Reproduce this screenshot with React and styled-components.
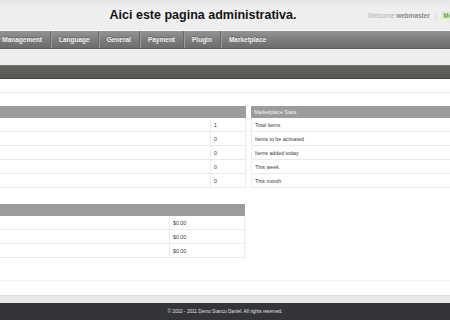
import React from "react";
import styled, { createGlobalStyle } from "styled-components";

const Global = createGlobalStyle`
  html, body { margin: 0; padding: 0; background: #ffffff; overflow: hidden; }
  body { font-family: "Liberation Sans", Arial, sans-serif; width: 450px; height: 320px; }
  #root { width: 450px; height: 320px; overflow: hidden; }
`;

const Page = styled.div`
  width: 450px;
  height: 320px;
  display: flex;
  flex-direction: column;
  overflow: hidden;
`;

const Header = styled.header`
  height: 30px;
  border-bottom: 1px solid #fafafa;
  background: linear-gradient(#e6e6e6, #efefef 30%, #eeeeee);
  display: grid;
  grid-template-columns: 368px auto;
  align-items: center;
  white-space: nowrap;
`;

const Title = styled.h1`
  margin: 0;
  padding-left: 38px;
  text-align: center;
  font-size: 12.5px;
  font-weight: bold;
  color: #151515;
  line-height: 1;
  padding-top: 1px;
`;

const Welcome = styled.div`
  font-size: 6.4px;
  color: #b0b0b0;
  display: flex;
  align-items: center;
  gap: 3px;
  padding-top: 1px;
`;

const User = styled.span`
  color: #8a8a8a;
  font-weight: bold;
`;

const Sep = styled.span`
  color: #c4c4c4;
  padding: 0 2px;
`;

const GreenLink = styled.span`
  color: #6aa84f;
  background: #e3efd9;
  padding: 1px 2px;
  font-weight: bold;
`;

const Nav = styled.nav`
  height: 17px;
  border-bottom: 1px solid #5e5e5e;
  background: linear-gradient(#939393, #7e7e7e 50%, #6c6c6c);
  display: flex;
  align-items: stretch;
  margin-left: -22px;
  width: 520px;
`;

const NavItem = styled.a`
  display: flex;
  align-items: center;
  padding: 0 8px;
  font-size: 6.5px;
  font-weight: bold;
  color: #f2f2f2;
  text-decoration: none;
  white-space: nowrap;
  text-shadow: 0 -1px 0 rgba(0, 0, 0, 0.25);
  border-right: 1px solid ${(p) => (p.$last ? "transparent" : "#666")};
  box-shadow: ${(p) => (p.$last ? "none" : "1px 0 0 #9a9a9a")};
`;

const LightBand = styled.div`
  height: 17px;
  background: #eeeeee;
`;

const DarkBar = styled.div`
  height: 12px;
  border-top: 1px solid #767672;
  border-bottom: 1px solid #454543;
  background: linear-gradient(#64645f, #575753);
`;

const Main = styled.main`
  flex: 1;
  background: #ffffff;
  display: flex;
  flex-direction: column;
`;

const Strip = styled.div`
  height: 13px;
  border-bottom: 1px solid #eeeeee;
`;

const Content = styled.div`
  padding: 13px 0 22px;
  margin-left: -160px;
  width: 700px;
  border-bottom: 1px solid #f0f0f0;
  display: flex;
  flex-direction: column;
  gap: 16px;
`;

const Row = styled.div`
  display: flex;
  gap: 5px;
`;

const Table = styled.div`
  width: ${(p) => p.$w}px;
  display: grid;
  grid-template-columns: ${(p) => p.$cols};
  font-size: 5.3px;
  color: #3a3a3a;
`;

const Head = styled.div`
  grid-column: 1 / -1;
  height: 12px;
  background: #9c9c9c;
  color: #f4f4f4;
  display: flex;
  align-items: center;
  padding-left: 3px;
  font-size: 5.3px;
`;

const Cell = styled.div`
  height: 13px;
  border-bottom: 1px solid #e9e9e9;
  border-right: 1px solid #ececec;
  border-left: ${(p) => (p.$first ? "1px solid #ececec" : "none")};
  display: flex;
  align-items: center;
  padding-left: 3px;
  white-space: nowrap;
  overflow: hidden;
`;

const Spacer = styled.div`
  height: 14px;
`;

const Band = styled.div`
  height: 7px;
  border-top: 1px solid #dddddd;
  background: #e8e8e8;
`;

const Footer = styled.footer`
  height: 17px;
  background: #333538;
  color: #e0e0e0;
  font-size: 4.7px;
  display: flex;
  align-items: center;
  justify-content: center;
`;

const navItems = ["User Management", "Language", "General", "Payment", "Plugin", "Marketplace"];

const userStats = [
  ["Total users", "1"],
  ["Users waiting for activation", "0"],
  ["Users registered today", "0"],
  ["Users registered this week", "0"],
  ["Users registered this month", "0"],
];

const marketStats = ["Total items", "Items to be activated", "Items added today", "This week", "This month"];

const salesStats = [
  ["Sales today", "$0.00"],
  ["Sales this week", "$0.00"],
  ["Sales this month", "$0.00"],
];

export default function App() {
  return (
    <Page>
      <Global />
      <Header>
        <Title>Aici este pagina administrativa.</Title>
        <Welcome>
          <span>
            Welcome <User>webmaster</User>
          </span>
          <Sep>|</Sep>
          <GreenLink>Menu</GreenLink>
        </Welcome>
      </Header>
      <Nav>
        {navItems.map((n, i) => (
          <NavItem key={n} $last={i === navItems.length - 1}>
            {n}
          </NavItem>
        ))}
      </Nav>
      <LightBand />
      <DarkBar />
      <Main>
        <Strip />
        <Content>
          <Row>
            <Table $w={406} $cols="371px 1fr">
              <Head>Users Stats</Head>
              {userStats.map(([l, v]) => (
                <React.Fragment key={l}>
                  <Cell $first>{l}</Cell>
                  <Cell>{v}</Cell>
                </React.Fragment>
              ))}
            </Table>
            <Table $w={260} $cols="1fr">
              <Head>Marketplace Stats</Head>
              {marketStats.map((l) => (
                <Cell key={l} $first>
                  {l}
                </Cell>
              ))}
            </Table>
          </Row>
          <Table $w={405} $cols="330px 1fr">
            <Head>Sales Stats</Head>
            {salesStats.map(([l, v]) => (
              <React.Fragment key={l}>
                <Cell $first>{l}</Cell>
                <Cell>{v}</Cell>
              </React.Fragment>
            ))}
          </Table>
        </Content>
        <Spacer />
      </Main>
      <Band />
      <Footer>© 2010 - 2011 Demo Stancu Daniel. All rights reserved.</Footer>
    </Page>
  );
}
